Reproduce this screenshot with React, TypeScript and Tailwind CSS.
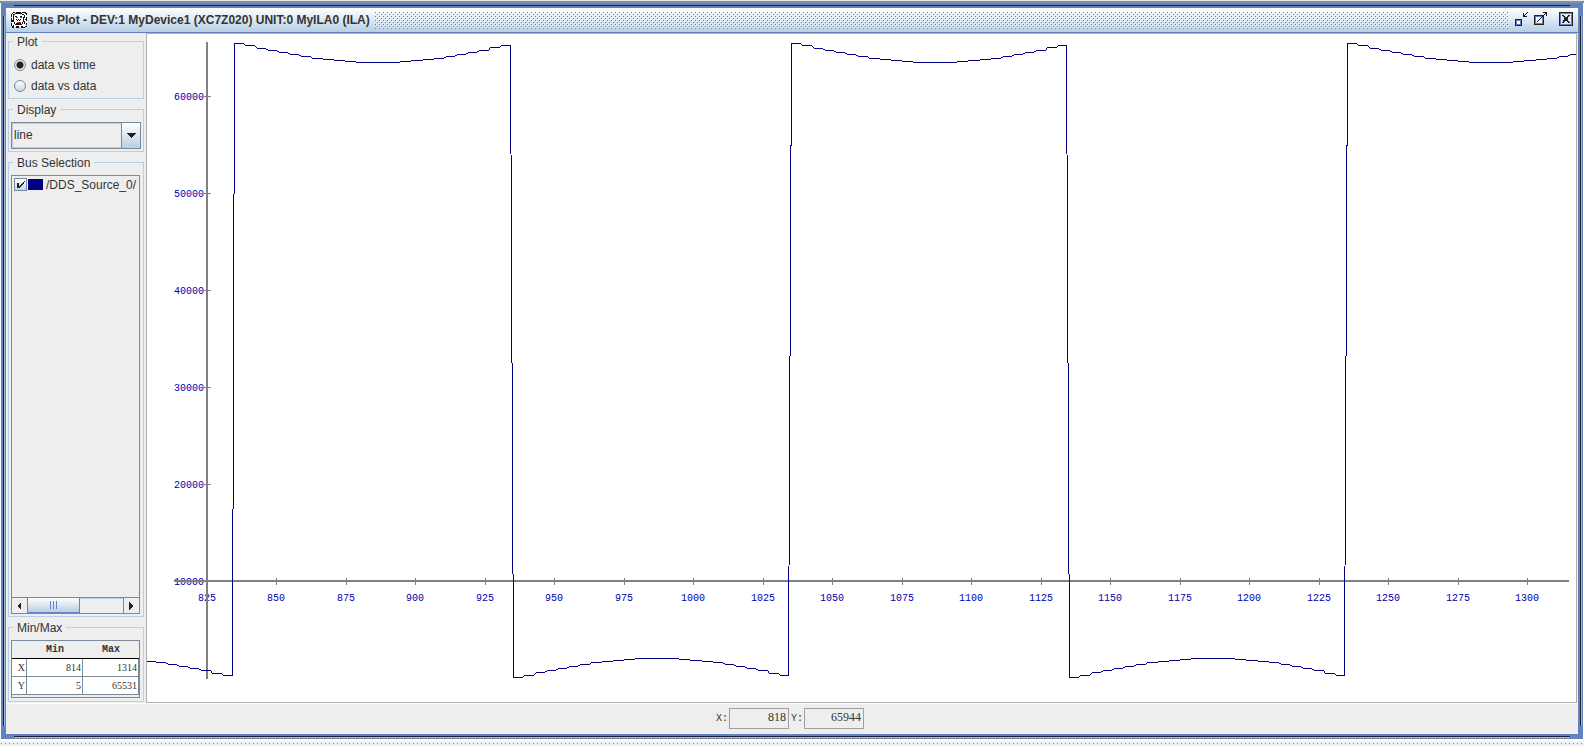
import { useState } from "react";
import type { ReactNode } from "react";

const NAVY = "#000080";

// [start, end, depth] of every quantised step in half a period
const steps = [
  [0, 9, 0], [11, 20, 2], [23, 31, 5], [34, 42, 7], [45, 53, 9], [56, 64, 11],
  [67, 76, 13], [78, 88, 15], [89, 99, 16], [100, 110, 17], [111, 121, 18],
  [122, 165, 19], [166, 176, 18], [177, 188, 17], [189, 199, 16], [200, 209, 15],
  [212, 220, 13], [223, 231, 11], [234, 242, 9], [245, 254, 7], [256, 265, 4],
  [267, 276, 2],
];

const halves = [
  { x: -191, end: 85, high: false },
  { x: 87, end: 363, high: true },
  { x: 366, end: 641, high: false },
  { x: 644, end: 919, high: true },
  { x: 922, end: 1197, high: false },
  { x: 1200, end: 1476, high: true },
];

const trace = halves
  .flatMap(({ x, end, high }) =>
    steps.flatMap(([from, to, depth]) => {
      const y = high ? 9 + depth : 643 - depth;
      return [`${x + from}.5,${y}.5`, `${Math.min(x + to, end)}.5,${y}.5`];
    })
  )
  .join(" ");

const xTicks = Array.from({ length: 20 }, (_, i) => 825 + i * 25);
const yTicks = [60000, 50000, 40000, 30000, 20000, 10000];

const Plot = () => (
  <svg
    viewBox="0 0 1429 668"
    preserveAspectRatio="xMinYMin slice"
    className="block h-full w-full"
    role="img"
    aria-label="Bus plot"
  >
    <g fill="#0000b0" fontFamily="'Liberation Mono', monospace" fontSize="10">
      {yTicks.map((v, i) => (
        <text key={v} x="57" y={66 + i * 97} textAnchor="end">{v}</text>
      ))}
      {xTicks.map((v, i) => (
        <text key={v} x={Math.floor(60 + i * 69.5)} y="567" textAnchor="middle">{v}</text>
      ))}
    </g>
    <g fill="#808080" shapeRendering="crispEdges">
      <rect x="59" y="8" width="2" height="637" />
      <rect x="27" y="546" width="1395" height="2" />
      {yTicks.map((v, i) => (
        <rect key={v} x="57" y={62 + i * 97} width="7" height="1" />
      ))}
      {xTicks.map((v, i) => (
        <rect key={v} x={Math.floor(60 + i * 69.5)} y="544" width="1" height="7" />
      ))}
    </g>
    <polyline points={trace} fill="none" stroke={NAVY} shapeRendering="crispEdges" />
  </svg>
);

const Group = ({ title, className, children }: { title: string; className: string; children: ReactNode }) => (
  <fieldset className={`flex min-w-0 flex-col border border-[#b8cfe5] px-0.5 ${className}`}>
    <legend className="ml-0.5 px-1 pt-0.5 text-xs leading-[14px]">{title}</legend>
    {children}
  </fieldset>
);

const PlotRadio = ({ label, checked, onChange }: { label: string; checked: boolean; onChange: () => void }) => (
  <label className="flex h-[21px] items-center gap-[5px] pl-[3px]">
    <input
      type="radio"
      name="plot"
      checked={checked}
      onChange={onChange}
      className="h-3 w-3 appearance-none rounded-full border border-[#7a8a99] bg-linear-to-b from-white to-[#c4d7e9] checked:bg-[radial-gradient(circle,#222_3px,#e4edf5_4px)]"
    />
    {label}
  </label>
);

const TitleIcon = () => (
  <svg width="16" height="16" viewBox="0 0 16 16" shapeRendering="crispEdges" className="shrink-0">
    <rect x="1" y="1" width="14" height="14" fill="#fff" />
    <g fill="none" stroke="#111">
      <path d="M2 .5h2M5 .5h5M11 .5h3M.5 2v3M.5 6v4M.5 11v3M15.5 1v2M15.5 5v4M15.5 11v2M1 15.5h2M5 15.5h3M10 15.5h4M1.5 1v1M14.5 0v2M1 14.5h2M14 14.5h2M2 2.5h1M2 13.5h1" />
      <path d="M4 1.5h7M11 2.5h2M3 2.5h1M2.5 3v7M13.5 3v3M12.5 5v5M3.5 10v2M11.5 10v2M4 12.5h7M14 7.5h1M13.5 9v3M5 14.5h3M10 14.5h2M1.5 8v2" />
      <path d="M4 4.5h2M9 4.5h2M5 7.5h1M7 7.5h1M9 7.5h1M6 8.5h1M8 8.5h1M5 11.5h5" />
    </g>
    <path d="M5 5.5h2M9 5.5h2M6 10.5h4" stroke="#e02020" />
  </svg>
);

const Restore = () => (
  <svg width="14" height="14" viewBox="0 0 14 14" shapeRendering="crispEdges">
    <path d="M.5 7.5h6v6h-6z" fill="#fff" stroke="#222" />
    <path d="M1.5 8.5h4v4h-4z" fill="none" stroke="#6382bf" />
    <path d="M12 .5h1M11 1.5h1M10 2.5h1M8.5 1v4M8 4.5h4M9 3.5h1" stroke="#111" />
  </svg>
);

const Maximize = () => (
  <svg width="14" height="14" viewBox="0 0 14 14" shapeRendering="crispEdges">
    <path d="M.5 3.5h9v9h-9z" fill="#f4f8fc" stroke="#222" />
    <path d="M1.5 4.5h7v7h-7z" fill="none" stroke="#6382bf" />
    <path d="M3 9.5h1M4 8.5h1M5 7.5h1M6 6.5h1M7 5.5h1M8 4.5h1M9 3.5h1M10 2.5h1M11 1.5h1M9 .5h4M12.5 0v4" stroke="#111" />
  </svg>
);

const Close = () => (
  <svg width="14" height="14" viewBox="0 0 14 14" shapeRendering="crispEdges">
    <path d="M.5 .5h13v13h-13z" fill="#dde8f3" stroke="#222" />
    <path d="M1.5 1.5h11v11h-11z" fill="none" stroke="#6382bf" />
    <path d="M3 3l7 8M4 3l7 8M10 3l-7 8M11 3l-7 8" stroke="#222" />
  </svg>
);

const Arrow = ({ d }: { d: string }) => (
  <svg width="9" height="8" viewBox="0 0 9 8" fill="#222" shapeRendering="crispEdges">
    <path d={d} />
  </svg>
);

const rows = [
  { name: "X", min: 814, max: 1314 },
  { name: "Y", min: 5, max: 65531 },
];

const App = () => {
  const [mode, setMode] = useState("time");
  const cell = "border-r border-b border-[#7a8a99] bg-white p-0 pr-px text-right";
  const field =
    "h-[21px] w-15 border border-[#a0a0a0] bg-[#eee] pr-0.5 pb-0.5 text-right font-['Liberation_Serif',serif] text-xs text-[#333]";

  return (
    <div className="flex h-screen min-h-[480px] flex-col bg-white font-['Liberation_Sans',sans-serif] text-xs text-[#333]">
      <div className="h-[3px] shrink-0 border-b-2 border-[#83929c] bg-[#dfe8ec]" />
      <main className="relative mx-px flex min-h-0 flex-1 flex-col border-5 border-[#6382bf] bg-[#eee]">
        {/* grooves in the window frame */}
        <div className="absolute -top-[3px] right-2 left-2 h-px bg-[#222]" />
        <div className="absolute right-2 -bottom-[4px] left-2 h-0.5 border-t border-[#222] bg-[#a3b8cc]" />
        <div className="absolute top-2 bottom-2 -left-[3px] w-0.5 border-l border-[#222] bg-[#a3b8cc]" />
        <div className="absolute top-2 -right-[4px] bottom-2 w-0.5 border-l border-[#222] bg-[#a3b8cc]" />

        <header className="flex h-[25px] shrink-0 items-center border-b border-[#6382bf] bg-linear-to-b from-white to-[#b8cfe5] px-[5px]">
          <TitleIcon />
          <h1 className="ml-1 font-bold whitespace-nowrap">
            Bus Plot - DEV:1 MyDevice1 (XC7Z020) UNIT:0 MyILA0 (ILA)
          </h1>
          <svg className="ml-[5px] h-[17px] min-w-0 flex-1" shapeRendering="crispEdges">
            <defs>
              <pattern id="bumps" width="4" height="4" patternUnits="userSpaceOnUse">
                <path d="M0 0h1v1H0zM2 2h1v1H2z" fill="#6382bf" />
                <path d="M1 1h1v1H1zM3 3h1v1H3z" fill="#fff" />
              </pattern>
            </defs>
            <rect width="100%" height="100%" fill="url(#bumps)" />
          </svg>
          <div className="mb-0.5 ml-1.5 flex items-center">
            <button type="button" aria-label="Iconify" className="mr-[5px]"><Restore /></button>
            <button type="button" aria-label="Maximize" className="mr-[11px]"><Maximize /></button>
            <button type="button" aria-label="Close"><Close /></button>
          </div>
        </header>

        <div className="flex min-h-0 flex-1">
          <aside className="mr-0.5 ml-0.5 flex w-[136px] shrink-0 flex-col gap-0.5">
            <Group title="Plot" className="h-[66px] pt-[5px]">
              <PlotRadio label="data vs time" checked={mode === "time"} onChange={() => setMode("time")} />
              <PlotRadio label="data vs data" checked={mode === "data"} onChange={() => setMode("data")} />
            </Group>

            <Group title="Display" className="h-[51px] pt-[5px]">
              <div className="relative h-[27px] w-[130px]">
                <select
                  aria-label="Display"
                  className="h-full w-full appearance-none border border-[#7a8a99] bg-[#eee] pb-0.5 pl-0.5 text-xs inset-ring inset-ring-[#b8cfe5]"
                >
                  <option>line</option>
                  <option>points</option>
                </select>
                <span className="pointer-events-none absolute inset-y-0 right-0 flex w-5 items-center justify-center border border-[#7a8a99] bg-linear-to-b from-white to-[#b8cfe5]">
                  <svg width="10" height="5" viewBox="0 0 10 5" fill="#222" shapeRendering="crispEdges">
                    <path d="M0 0h10L5 5z" />
                  </svg>
                </span>
              </div>
            </Group>

            <Group title="Bus Selection" className="min-h-0 flex-1 pt-[5px] pb-0.5">
              <div className="flex w-[129px] flex-1 flex-col border border-[#7a8a99]">
                <label className="flex h-[17px] items-center pl-0.5 whitespace-nowrap">
                  <span className="relative h-[13px] w-[13px] shrink-0">
                    <input
                      type="checkbox"
                      defaultChecked
                      className="peer block h-[13px] w-[13px] appearance-none border border-[#7a8a99] bg-linear-to-b from-white to-[#c4d7e9]"
                    />
                    <svg
                      viewBox="0 0 13 13"
                      className="pointer-events-none invisible absolute inset-0 peer-checked:visible"
                      shapeRendering="crispEdges"
                    >
                      <path d="M3 5h2v3h1V7h1V6h1V5h1V4h1V3h1v1h-1v2H9v1H8v1H7v1H6v1H3z" fill="#222" />
                    </svg>
                  </span>
                  <span className="ml-px h-[11px] w-[15px] shrink-0 bg-[#000080]" />
                  <span className="ml-[3px]">/DDS_Source_0/</span>
                </label>
                <div className="mt-auto flex h-4 border-t border-[#7a8a99]">
                  <button type="button" aria-label="Scroll left" className="flex w-[15px] items-center justify-center">
                    <Arrow d="M6 0v8L2 4z" />
                  </button>
                  <div className="flex w-[53px] items-center justify-center gap-0.5 border border-t-0 border-[#6382bf] bg-linear-to-b from-white to-[#b8cfe5]">
                    <i className="h-2 w-px bg-[#6382bf]" />
                    <i className="h-2 w-px bg-[#6382bf]" />
                    <i className="h-2 w-px bg-[#6382bf]" />
                  </div>
                  <div className="flex-1 border-t border-[#b8cfe5]" />
                  <button type="button" aria-label="Scroll right" className="flex w-4 items-center justify-center border-l border-[#7a8a99]">
                    <Arrow d="M2 0v8l4-4z" />
                  </button>
                </div>
              </div>
            </Group>

            <Group title="Min/Max" className="h-[83px] pt-[5px]">
              <div className="h-[58px] w-[129px] border border-[#7a8a99]">
                <table className="w-full table-fixed border-separate border-spacing-0 font-['Liberation_Serif',serif] text-[10px] leading-4">
                  <colgroup>
                    <col className="w-[15px]" />
                    <col />
                    <col />
                  </colgroup>
                  <thead className="font-['Liberation_Mono',monospace]">
                    <tr className="h-[18px]">
                      <th className="border-b border-black p-0" />
                      <th className="border-b border-black p-0">Min</th>
                      <th className="border-b border-black p-0">Max</th>
                    </tr>
                  </thead>
                  <tbody>
                    {rows.map((r) => (
                      <tr key={r.name} className="h-[18px]">
                        <td className={cell}>{r.name}</td>
                        <td className={cell}>{r.min}</td>
                        <td className={cell}>{r.max}</td>
                      </tr>
                    ))}
                  </tbody>
                </table>
              </div>
            </Group>
            <div className="-mt-0.5 h-px shrink-0" />
          </aside>

          <section className="mr-px min-w-0 flex-1 border border-[#b0b0b0] bg-white">
            <Plot />
          </section>
        </div>

        <footer className="flex h-[31px] shrink-0 items-center justify-center border-t border-white pr-1 pb-px">
          <label htmlFor="cursor-x" className="mr-px font-['Liberation_Mono',monospace] text-[10px]">X:</label>
          <input id="cursor-x" readOnly value="818" className={field} />
          <label htmlFor="cursor-y" className="mr-px ml-0.5 font-['Liberation_Mono',monospace] text-[10px]">Y:</label>
          <input id="cursor-y" readOnly value="65944" className={field} />
        </footer>
      </main>
      <svg className="block h-[7px] w-full shrink-0" shapeRendering="crispEdges">
        <defs>
          <pattern id="dots" width="4" height="7" patternUnits="userSpaceOnUse">
            <rect y="2" width="4" height="5" fill="#f0f0f0" />
            <rect y="4" x="1" width="1" height="1" fill="#808898" />
          </pattern>
        </defs>
        <rect width="100%" height="100%" fill="url(#dots)" />
      </svg>
    </div>
  );
};

export default App;
